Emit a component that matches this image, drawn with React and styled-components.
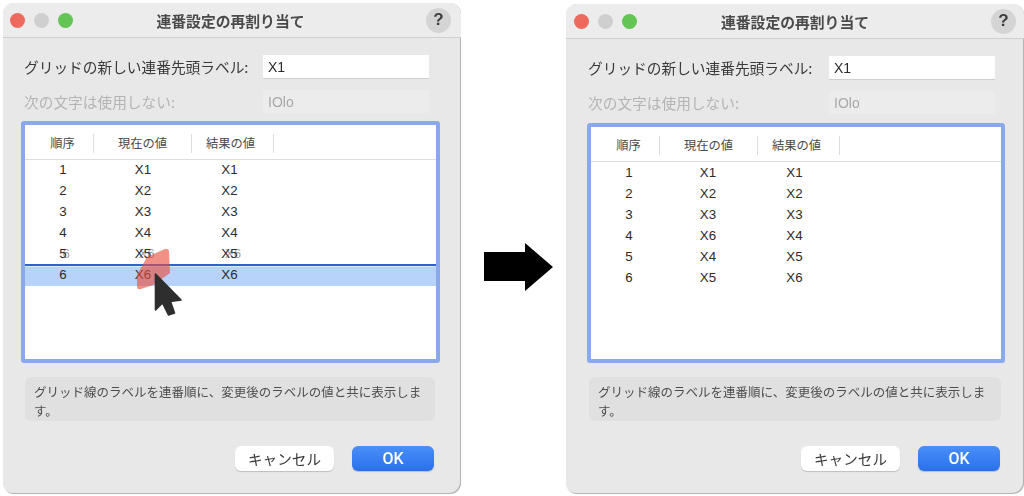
import React from 'react';
import styled, { createGlobalStyle } from 'styled-components';

const GlobalStyle = createGlobalStyle`
  html, body { margin: 0; padding: 0; background: #fff; }
  body { font-family: "Liberation Sans", "Noto Sans CJK JP", sans-serif; }
`;

const Page = styled.div`
  width: 1024px;
  height: 496px;
  box-sizing: border-box;
  padding: 0 0 2px 3px;
  display: flex;
  align-items: flex-end;
  overflow: hidden;
  filter: blur(0.35px);
`;

const Dialog = styled.section`
  width: 458px;
  height: ${p => p.$height}px;
  box-sizing: border-box;
  flex: none;
  display: flex;
  flex-direction: column;
  background: #e8e8e8;
  border-radius: 11px;
  box-shadow: inset -1px -1px 0 #b4b4b4, inset 0 1px 0 #dcdcdc;
  overflow: hidden;
`;

const TitleBar = styled.header`
  height: 35px;
  flex: none;
  box-sizing: border-box;
  padding: 0 ${p => p.$end}px 0 ${p => p.$start}px;
  display: grid;
  grid-template-columns: 1fr auto 1fr;
  align-items: center;
  background: #ececec;
  border-bottom: 1px solid #cfcfcf;
`;

const Lights = styled.div`
  display: flex;
  gap: 9px;
`;

const Light = styled.span`
  width: 15px;
  height: 15px;
  border-radius: 50%;
  background: ${p => p.$color};
`;

const Title = styled.h1`
  margin: 0;
  text-align: center;
  font-family: "Noto Sans CJK JP", sans-serif;
  font-size: 14.8px;
  font-weight: 700;
  color: #4a4a4a;
`;

const HelpButton = styled.span`
  justify-self: end;
  width: 25px;
  height: 25px;
  border-radius: 50%;
  background: #d4d4d4;
  color: #3c3c3c;
  font-size: 17px;
  font-weight: 700;
  display: flex;
  align-items: center;
  justify-content: center;
`;

const Body = styled.div`
  flex: 1;
  min-height: 0;
  display: flex;
  flex-direction: column;
  padding: 17px ${p => p.$right}px 23px ${p => p.$left}px;
`;

const Field = styled.div`
  display: flex;
  align-items: center;
  height: 23px;
  margin: 0 ${p => p.$inputEnd}px 12px ${p => p.$labelStart}px;
  font-family: "Noto Sans CJK JP", sans-serif;
  font-size: 14.7px;
  color: ${p => (p.$disabled ? '#b4b4b4' : '#3a3a3a')};
`;

const Input = styled.div`
  margin-left: auto;
  width: 166px;
  height: 23px;
  box-sizing: border-box;
  padding-left: 5px;
  display: flex;
  align-items: center;
  font-family: "Liberation Sans", sans-serif;
  font-size: 14px;
  background: ${p => (p.$disabled ? '#ececec' : '#fff')};
  color: ${p => (p.$disabled ? '#a8a8a8' : '#2a2a2a')};
  box-shadow: ${p => (p.$disabled ? 'none' : '0 1px 0 #cfcfcf')};
`;

const TableFrame = styled.div`
  position: relative;
  flex: 1;
  min-height: 0;
  margin-top: ${p => p.$offset}px;
  border: 4px solid #8aa9ec;
  border-radius: 3px;
  background: #fff;
`;

const columns = '69px 98px 82px';

const HeaderRow = styled.div`
  display: grid;
  grid-template-columns: ${columns};
  align-items: center;
  height: 35px;
  box-sizing: border-box;
  padding-top: 2px;
  border-bottom: 1px solid #dedede;
`;

const HeaderCell = styled.div`
  height: 19px;
  display: flex;
  align-items: center;
  justify-content: center;
  padding-left: ${p => p.$pad || 0}px;
  padding-right: ${p => p.$padEnd || 0}px;
  box-sizing: border-box;
  border-right: 1px solid #dcdcdc;
  font-family: "Noto Sans CJK JP", sans-serif;
  font-size: 12.3px;
  color: #4a4a4a;
`;

const Row = styled.div`
  position: relative;
  display: grid;
  grid-template-columns: ${columns};
  height: 21px;
  align-items: center;
  background: ${p => (p.$selected ? '#b8d3f9' : 'transparent')};
  ${p => p.$selected && `
    &::before {
      content: "";
      position: absolute;
      left: 0;
      right: 0;
      top: -1px;
      height: 2px;
      background: #2d62cf;
      box-shadow: 0 1px 0 #dbe8fb;
    }
  `}
`;

const Cell = styled.div`
  position: relative;
  text-align: center;
  padding-left: ${p => p.$pad || 0}px;
  padding-right: ${p => p.$padEnd || 0}px;
  padding-bottom: ${p => p.$lift}px;
  font-size: 13.3px;
  color: #2b2b2b;
`;

const Ghost = styled.span`
  position: absolute;
  left: 50%;
  top: 0;
  transform: translateX(${p => p.$x}px);
  color: rgba(60, 60, 60, 0.5);
`;

const Drag = styled.svg`
  position: absolute;
  left: 112px;
  top: 120px;
  pointer-events: none;
`;

const Note = styled.p`
  margin: 14px ${p => p.$end}px 25px ${p => p.$start}px;
  height: 44px;
  box-sizing: border-box;
  padding: 5px 9px 0;
  border-radius: 6px;
  background: #e0e0e0;
  font-family: "Noto Sans CJK JP", sans-serif;
  font-size: 12.5px;
  line-height: 19px;
  color: #4d4d4d;
`;

const Buttons = styled.div`
  display: flex;
  justify-content: flex-end;
  gap: 18px;
  margin-right: ${p => p.$end}px;
`;

const Button = styled.div`
  width: ${p => p.$w}px;
  height: 25px;
  border-radius: 6px;
  display: flex;
  align-items: center;
  justify-content: center;
  font-family: ${p => (p.$primary ? 'Roboto, sans-serif' : '"Noto Sans CJK JP", sans-serif')};
  font-size: ${p => (p.$primary ? 16 : 14.6)}px;
  font-weight: ${p => (p.$primary ? 500 : 400)};
  color: ${p => (p.$primary ? '#fff' : '#3a3a3a')};
  background: ${p => (p.$primary ? 'linear-gradient(#4a8ff8, #2a70ec)' : '#fff')};
  box-shadow: 0 1px 1px rgba(0, 0, 0, 0.18);
`;

const ArrowSlot = styled.div`
  width: 105px;
  height: 100%;
  flex: none;
  display: flex;
  align-items: flex-start;
  justify-content: center;
  padding: 243px 0 0 10px;
  box-sizing: border-box;
`;

const rowsLeft = [
  ['1', 'X1', 'X1'],
  ['2', 'X2', 'X2'],
  ['3', 'X3', 'X3'],
  ['4', 'X4', 'X4'],
  ['5', 'X5', 'X5'],
  ['6', 'X6', 'X6'],
];

const rowsRight = [
  ['1', 'X1', 'X1'],
  ['2', 'X2', 'X2'],
  ['3', 'X3', 'X3'],
  ['4', 'X6', 'X4'],
  ['5', 'X4', 'X5'],
  ['6', 'X5', 'X6'],
];

function Window({ rows, dragging, height, left, right, labelStart, inputEnd, noteStart, noteEnd, buttonEnd, lift, valueShift, barStart, barEnd, tableOffset }) {
  return (
    <Dialog $height={height}>
      <TitleBar $start={barStart} $end={barEnd}>
        <Lights>
          <Light $color="#ee6a5f" />
          <Light $color="#cfcfcf" />
          <Light $color="#62c554" />
        </Lights>
        <Title>連番設定の再割り当て</Title>
        <HelpButton>?</HelpButton>
      </TitleBar>
      <Body $left={left} $right={right}>
        <Field $labelStart={labelStart} $inputEnd={inputEnd}>
          グリッドの新しい連番先頭ラベル:
          <Input>X1</Input>
        </Field>
        <Field $labelStart={labelStart} $inputEnd={inputEnd} $disabled>
          次の文字は使用しない:
          <Input $disabled>IOlo</Input>
        </Field>
        <TableFrame $offset={tableOffset}>
          <HeaderRow>
            <HeaderCell $pad={7}>順序</HeaderCell>
            <HeaderCell>現在の値</HeaderCell>
            <HeaderCell $padEnd={4}>結果の値</HeaderCell>
          </HeaderRow>
          {rows.map((r, i) => (
            <Row key={r[0]} $selected={dragging && i === 5}>
              <Cell $pad={7} $lift={lift}>
                {r[0]}
                {dragging && i === 4 && <Ghost $x={3}>6</Ghost>}
              </Cell>
              <Cell $padEnd={valueShift} $lift={lift}>
                {r[1]}
                {dragging && i === 4 && <Ghost $x={-4.5}>X6</Ghost>}
              </Cell>
              <Cell $padEnd={7 + valueShift} $lift={lift}>
                {r[2]}
                {dragging && i === 4 && <Ghost $x={-8}>X6</Ghost>}
              </Cell>
            </Row>
          ))}
          {dragging && (
            <Drag width="60" height="80" viewBox="137 245 60 80">
              <path
                d="M147 257 L165 249 Q169 248 169 252 L170 273 L153 285 L141 289 Q137 290 137 287 L137 275 Z"
                fill="rgba(232, 78, 58, 0.62)"
              />
              <path
                d="M155.5 274 L155.5 310 L162.5 303 L168.5 315 L174.5 313 L170.5 301.5 L181 300 Z"
                fill="#2e2e2e"
                stroke="#2e2e2e"
                strokeWidth="1.6"
                strokeLinejoin="round"
              />
            </Drag>
          )}
        </TableFrame>
        <Note $start={noteStart} $end={noteEnd}>
          グリッド線のラベルを連番順に、変更後のラベルの値と共に表示します。
        </Note>
        <Buttons $end={buttonEnd}>
          <Button $w={99}>キャンセル</Button>
          <Button $w={82} $primary>OK</Button>
        </Buttons>
      </Body>
    </Dialog>
  );
}

export default function App() {
  return (
    <Page>
      <GlobalStyle />
      <Window
        rows={rowsLeft}
        dragging
        height={491}
        left={18}
        right={21}
        labelStart={3}
        inputEnd={11}
        noteStart={4}
        noteEnd={5}
        buttonEnd={6}
        lift={2}
        valueShift={0}
        barStart={7}
        barEnd={10}
        tableOffset={-4}
      />
      <ArrowSlot>
        <svg width="70" height="48" viewBox="0 0 70 48">
          <path d="M0 9 H41 V0 L69 24 L41 48 V38 H0 Z" fill="#000" />
        </svg>
      </ArrowSlot>
      <Window
        rows={rowsRight}
        height={490}
        left={21}
        right={19}
        labelStart={1}
        inputEnd={10}
        noteStart={2}
        noteEnd={4}
        buttonEnd={5}
        lift={0}
        valueShift={2}
        barStart={8}
        barEnd={8}
        tableOffset={-3}
      />
    </Page>
  );
}
